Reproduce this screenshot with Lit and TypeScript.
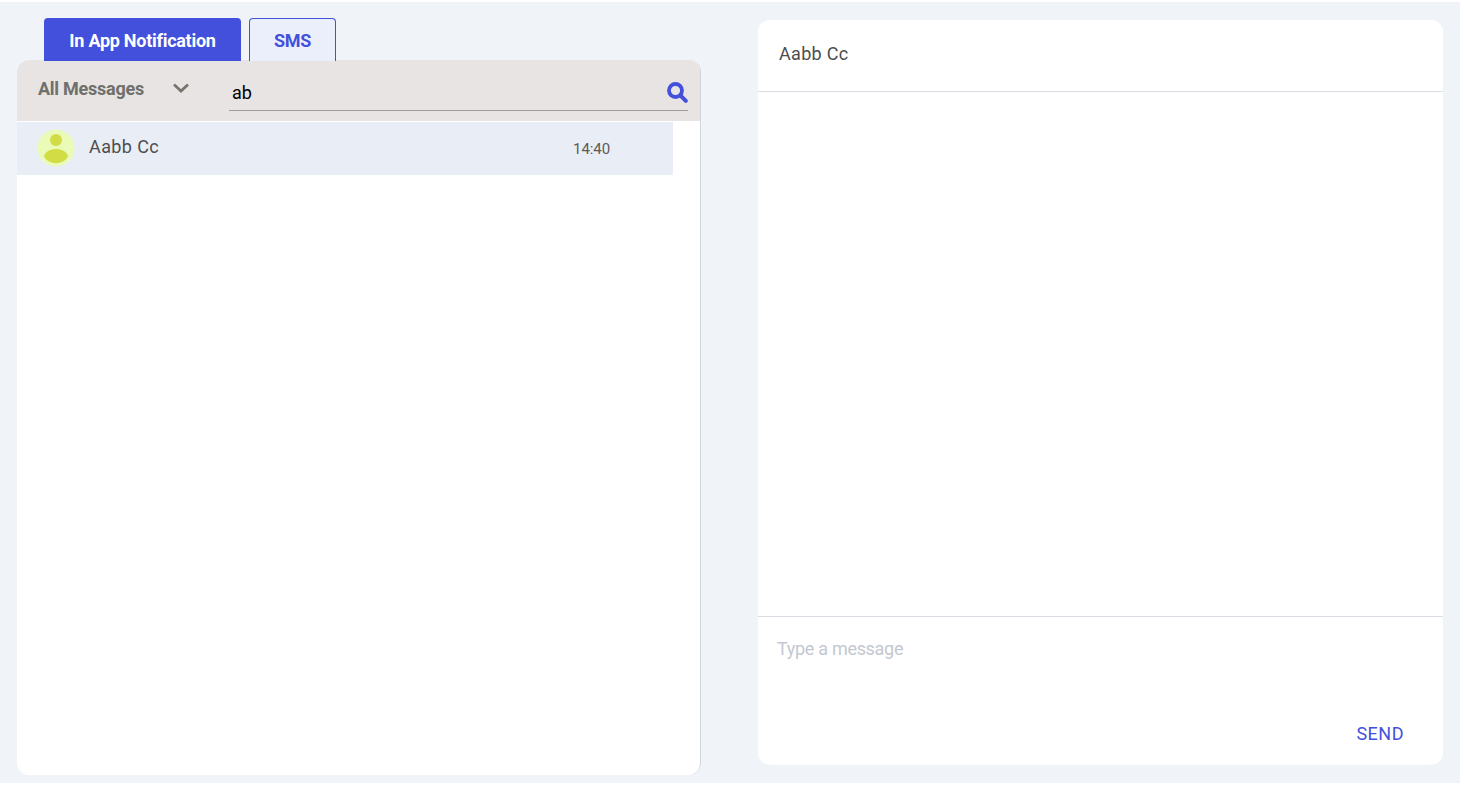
import { LitElement, html, css } from "lit";
import { customElement } from "lit/decorators.js";

@customElement("app-root")
export class AppRoot extends LitElement {
  static styles = css`
    :host {
      display: block;
      width: 1464px;
      height: 785px;
      background: #fff;
      font-family: Roboto, "Liberation Sans", sans-serif;
      overflow: hidden;
    }
    .page {
      box-sizing: border-box;
      margin-top: 2px;
      width: 1460px;
      height: 781px;
      background: #f0f4f9;
      display: flex;
      align-items: flex-start;
      padding-left: 17px;
    }
    .left {
      width: 684px;
      margin-top: 16px;
      display: flex;
      flex-direction: column;
    }
    .tabs {
      display: flex;
      gap: 8px;
      padding-left: 27px;
      height: 42px;
      position: relative;
      z-index: 1;
    }
    .tab {
      box-sizing: border-box;
      height: 43px;
      padding-top: 2px;
      display: flex;
      align-items: center;
      justify-content: center;
      font-size: 18px;
      font-weight: 700;
      border-radius: 4px 4px 0 0;
      letter-spacing: -0.27px;
    }
    .tab.active {
      width: 197px;
      background: #4350dc;
      color: #fff;
    }
    .tab.idle {
      width: 87px;
      padding-top: 0;
      background: #ebeefb;
      color: #4350dc;
      border: 1px solid #4350dc;
      border-bottom: 0;
    }
    .panel {
      position: relative;
      height: 715px;
      background: #fff;
      border-radius: 12px;
      border-right: 1px solid #d2d5da;
      box-sizing: border-box;
      overflow: hidden;
    }
    .filter {
      height: 61px;
      background: #e8e4e3;
      display: flex;
      align-items: flex-start;
      box-sizing: border-box;
    }
    .all {
      margin: 19px 0 0 21px;
      width: 133px;
      font-size: 18px;
      font-weight: 700;
      line-height: 20px;
      color: #6f6f6b;
      letter-spacing: -0.25px;
    }
    .chev {
      margin: 21px 0 0 0;
      width: 20px;
      height: 14px;
      display: block;
    }
    .search {
      box-sizing: border-box;
      margin: 19px 0 0 38px;
      width: 459px;
      height: 32px;
      border-bottom: 1px solid #9c9c98;
      display: flex;
      align-items: flex-start;
      justify-content: space-between;
      padding-left: 3px;
    }
    .q {
      margin-top: 3px;
      font-size: 18px;
      line-height: 21px;
      color: #000;
    }
    .mag {
      width: 22px;
      height: 22px;
      margin: 2px 0 0 0;
      display: block;
    }
    .row {
      margin-top: 1px;
      width: 656px;
      height: 53px;
      background: #e9eef6;
      display: flex;
      align-items: center;
      box-sizing: border-box;
      padding-left: 20px;
    }
    .avatar {
      width: 38px;
      height: 38px;
      display: block;
      margin-bottom: 1px;
    }
    .name {
      margin: 0 0 4px 14px;
      font-size: 18px;
      letter-spacing: 0.4px;
      color: #4d4d4d;
      width: 484px;
    }
    .time {
      font-size: 15px;
      letter-spacing: -0.05px;
      color: #5e5a55;
    }
    .right {
      margin: 18px 0 0 57px;
      width: 685px;
      height: 745px;
      background: #fff;
      border-radius: 12px;
      display: flex;
      flex-direction: column;
    }
    .head {
      box-sizing: border-box;
      height: 72px;
      padding: 23px 0 0 21px;
      font-size: 18px;
      line-height: 21px;
      letter-spacing: 0.3px;
      color: #4d4d4d;
      border-bottom: 1px solid #d8dde3;
    }
    .body {
      flex: 1;
    }
    .compose {
      box-sizing: border-box;
      height: 149px;
      border-top: 1px solid #d8dde3;
      display: flex;
      flex-direction: column;
      justify-content: space-between;
      padding: 21px 39px 21px 19px;
    }
    .ph {
      font-size: 18px;
      line-height: 21px;
      letter-spacing: -0.3px;
      color: #c3c8d0;
    }
    .send {
      align-self: flex-end;
      font-size: 18px;
      line-height: 21px;
      letter-spacing: 0.5px;
      color: #4350dc;
    }
  `;

  render() {
    return html`
      <div class="page">
        <div class="left">
          <div class="tabs">
            <div class="tab active">In App Notification</div>
            <div class="tab idle">SMS</div>
          </div>
          <div class="panel">
            <div class="filter">
              <div class="all">All Messages</div>
              <svg class="chev" viewBox="0 0 20 14">
                <path d="M3 3.5 L10 10 L17 3.5" fill="none" stroke="#76766f" stroke-width="2.8" />
              </svg>
              <div class="search">
                <span class="q">ab</span>
                <svg class="mag" viewBox="0 0 22 22">
                  <circle cx="9.5" cy="9.5" r="6.5" fill="none" stroke="#4350dc" stroke-width="3.8" />
                  <path d="M14.5 14.5 L19.8 19.8" stroke="#4350dc" stroke-width="4" stroke-linecap="round" />
                </svg>
              </div>
            </div>
            <div class="row">
              <svg class="avatar" viewBox="0 0 38 38">
                <circle cx="19" cy="19" r="18.5" fill="#e9fbb6" />
                <circle cx="19" cy="11" r="6" fill="#d2dd46" />
                <path d="M7 27 C10 17.5 28 17.5 31 27 C28 36.5 10 36.5 7 27 Z" fill="#d2dd46" />
              </svg>
              <span class="name">Aabb Cc</span>
              <span class="time">14:40</span>
            </div>
          </div>
        </div>
        <div class="right">
          <div class="head">Aabb Cc</div>
          <div class="body"></div>
          <div class="compose">
            <div class="ph">Type a message</div>
            <div class="send">SEND</div>
          </div>
        </div>
      </div>
    `;
  }
}
